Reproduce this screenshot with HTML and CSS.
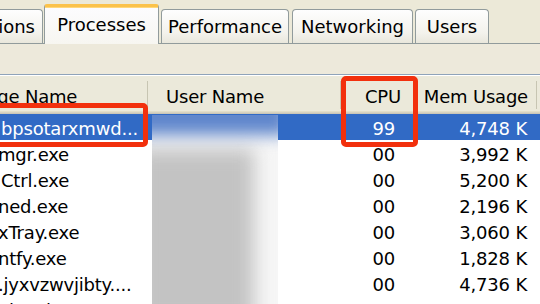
FILE: index.html
```html
<!DOCTYPE html>
<html lang="en">
<head>
    <meta charset="UTF-8">
    <meta name="viewport" content="width=device-width, initial-scale=1.0">
    <title>Windows Task Manager</title>

    <link rel="stylesheet" href="styles.css">
</head>
<body>
    <div class="window">
        <div class="tabs">
            <div class="tab t-apps">Applications</div>
            <div class="tab active t-proc">Processes</div>
            <div class="tab t-perf">Performance</div>
            <div class="tab t-net">Networking</div>
            <div class="tab t-users">Users</div>
        </div>
        <div class="page">
            <div class="list">
                <div class="row head">
                    <div class="c name"><span class="img-head">Image Name</span></div>
                    <div class="c user">User Name</div>
                    <div class="c cpu">CPU</div>
                    <div class="c mem">Mem Usage</div>
                    <div class="c extra"></div>
                </div>
                <div class="row sel">
                    <div class="c name">bpsotarxmwd...</div>
                    <div class="c user"></div>
                    <div class="c cpu">99</div>
                    <div class="c mem">4,748 K</div>
                    <div class="c extra"></div>
                </div>
                <div class="row">
                    <div class="c name cut">mgr.exe</div>
                    <div class="c user"></div>
                    <div class="c cpu">00</div>
                    <div class="c mem">3,992 K</div>
                    <div class="c extra"></div>
                </div>
                <div class="row">
                    <div class="c name">Ctrl.exe</div>
                    <div class="c user"></div>
                    <div class="c cpu">00</div>
                    <div class="c mem">5,200 K</div>
                    <div class="c extra"></div>
                </div>
                <div class="row">
                    <div class="c name cut">ned.exe</div>
                    <div class="c user"></div>
                    <div class="c cpu">00</div>
                    <div class="c mem">2,196 K</div>
                    <div class="c extra"></div>
                </div>
                <div class="row">
                    <div class="c name cut">xTray.exe</div>
                    <div class="c user"></div>
                    <div class="c cpu">00</div>
                    <div class="c mem">3,060 K</div>
                    <div class="c extra"></div>
                </div>
                <div class="row">
                    <div class="c name cut">ntfy.exe</div>
                    <div class="c user"></div>
                    <div class="c cpu">00</div>
                    <div class="c mem">1,828 K</div>
                    <div class="c extra"></div>
                </div>
                <div class="row">
                    <div class="c name cut">.jyxvzwvjibty....</div>
                    <div class="c user"></div>
                    <div class="c cpu">00</div>
                    <div class="c mem">4,736 K</div>
                    <div class="c extra"></div>
                </div>
                <div class="row">
                    <div class="c name last">iexplore.exe</div>
                    <div class="c user"></div>
                    <div class="c cpu">00</div>
                    <div class="c mem">2,474 K</div>
                    <div class="c extra"></div>
                </div>
            </div>

            <!-- blurred user names -->
            <div class="blur"></div>

            <!-- red marks drawn over the screenshot -->
            <div class="mark mark-name"></div>
            <div class="mark mark-cpu"></div>
        </div>
    </div>
</body>
</html>
```

FILE: styles.css
```css
body{
    margin:0;
    width:540px;
    height:304px;
    overflow:hidden;
    background-color:#ece9d8;
    font-family:"DejaVu Sans", Verdana, sans-serif;
    font-size:18px;
    color:#000;
}
div.window{
    position:relative;
    height:304px;
}
div.tabs{
    display:flex;
    align-items:flex-end;
    height:44px;
    margin-left:-83px;
    position:relative;
    z-index:2;
}
div.tab{
    box-sizing:border-box;
    height:34px;
    display:flex;
    align-items:center;
    justify-content:center;
    padding-bottom:1px;
    border:1px solid #919b9c;
    border-bottom:none;
    border-radius:4px 4px 0 0;
    background-image:linear-gradient(#fefefe, #f3f2ec 70%, #e9e7dc);
    margin-bottom:1px;
}
div.tab.active{
    height:40px;
    margin-bottom:0;
    padding-bottom:3px;
    border-top:3px solid #fbc24a;
    box-shadow:inset 0 1px 0 #ffd77a;
    background-image:linear-gradient(#fcfcfe, #f7f6f1);
    border-radius:3px 3px 0 0;
}
div.t-apps{ width:126px; }
div.t-proc{ width:115px; margin-left:1px; }
div.t-perf{ width:128px; margin-left:2px; }
div.t-net{ width:121px; margin-left:3px; }
div.t-users{ width:74px; margin-left:2px; }

div.page{
    border-top:1px solid #919b9c;
    margin-top:-1px;
    padding-top:30px;
    height:260px;
    background-color:#ede9db;
}
div.list{
    border-top:1px solid #8fa3b9;
    background-color:#fff;
    height:229px;
    letter-spacing:-0.2px;
}
div.row{
    display:grid;
    grid-template-columns:148px 193px 76px 120px 1fr;
    height:26px;
    white-space:nowrap;
}
div.c{
    overflow:hidden;
    box-sizing:border-box;
    height:26px;
    padding-top:4px;
    line-height:22px;
}
div.name{
    padding-left:1px;
}
div.name.cut{
    text-indent:-3px;
}
div.name.last{
    text-indent:8px;
}
div.cpu{
    text-align:right;
    padding-right:22px;
}
div.mem{
    text-align:right;
    padding-right:10px;
}
div.user{
    padding-left:18px;
}

div.row.head{
    height:39px;
    background-color:#ebe9da;
    box-shadow:inset 0 1px 0 #fff, inset 0 -1px 0 #cbc7b8, inset 0 -2px 0 #d6d2c2, inset 0 -3px 0 #e2dec8;
}
div.head div.c{
    position:relative;
    height:39px;
    padding-top:10px;
    line-height:24px;
}
div.head div.c::after{
    content:"";
    position:absolute;
    right:0;
    top:6px;
    bottom:5px;
    width:1px;
    background-color:#c7c5b2;
    box-shadow:1px 0 0 #fff;
}
div.head div.extra::after{
    display:none;
}
div.head div.cpu{
    padding-right:16px;
}
div.head div.mem{
    padding-right:9px;
}
div.head span.img-head{
    display:inline-block;
    margin-left:-37px;
}
div.row.sel{
    background-color:#316ac5;
    color:#fff;
}

div.blur{
    position:absolute;
    left:152px;
    top:115px;
    width:126px;
    height:189px;
    overflow:hidden;
    background-color:#f6f6f6;
}
div.blur::before{
    content:"";
    position:absolute;
    left:-14px;
    right:24px;
    top:34px;
    bottom:-20px;
    background-color:#c3c3c3;
    filter:blur(9px);
}
div.blur::after{
    content:"";
    position:absolute;
    left:-20px;
    right:-10px;
    top:-16px;
    height:36px;
    background-color:#5f86cc;
    filter:blur(8px);
}

div.mark{
    position:absolute;
    box-sizing:border-box;
    border:5px solid #f2300d;
    border-radius:5px;
    z-index:3;
}
div.mark-name{
    left:-12px;
    top:103px;
    width:160px;
    height:44px;
}
div.mark-cpu{
    left:341px;
    top:76px;
    width:77px;
    height:71px;
}
```
